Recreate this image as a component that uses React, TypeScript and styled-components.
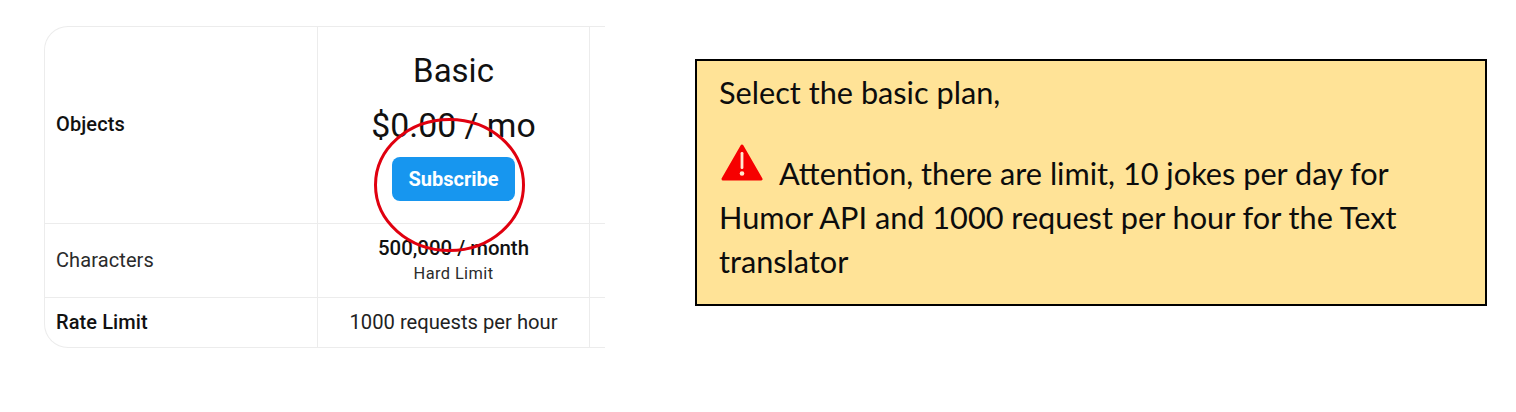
import React from "react";
import styled, { createGlobalStyle } from "styled-components";

const Global = createGlobalStyle`
  html, body { margin: 0; padding: 0; background: #fff; }
  body { font-family: "Inter", "Liberation Sans", sans-serif; }
`;

const Page = styled.div`
  width: 1516px;
  height: 412px;
  box-sizing: border-box;
  padding: 26px 0 0 44px;
  display: flex;
  align-items: flex-start;
  gap: 90px;
  overflow: hidden;
`;

const TableFrame = styled.div`
  position: relative;
  width: 561px;
  height: 322px;
`;

const Table = styled.div`
  width: 561px;
  height: 322px;
  box-sizing: border-box;
  border: 1px solid #ececec;
  border-right: 0;
  border-radius: 24px 0 0 24px;
  overflow: hidden;
  display: grid;
  grid-template-columns: 273px 272px 272px;
  grid-template-rows: 197px 74px 49px;
`;

const Cell = styled.div<{ $bottom?: boolean }>`
  box-sizing: border-box;
  border-right: 1px solid #ececec;
  border-bottom: ${(p) => (p.$bottom ? "0" : "1px solid #ececec")};
  display: flex;
  flex-direction: column;
  align-items: center;
  justify-content: center;
  color: #1b1b1b;
`;

const LabelCell = styled(Cell)`
  align-items: flex-start;
  padding-left: 11px;
`;

const Label = styled.span<{ $bold?: boolean }>`
  font-family: "Roboto", "Inter", sans-serif;
  font-size: 20px;
  letter-spacing: 0.1px;
  font-weight: ${(p) => (p.$bold ? 500 : 400)};
  color: ${(p) => (p.$bold ? "#111" : "#2b2b2b")};
  margin-top: -2px;
`;

const PlanName = styled.div`
  font-family: "Roboto", sans-serif;
  font-size: 33px;
  line-height: 38px;
  color: #111;
  margin-top: 3px;
`;

const Price = styled.div`
  font-family: "Roboto", sans-serif;
  font-size: 33.8px;
  line-height: 40px;
  margin-top: 16px;
  color: #111;
`;

const SubscribeButton = styled.button`
  width: 123px;
  height: 44px;
  margin-top: 11px;
  border: 0;
  border-radius: 8px;
  background: #1796ef;
  color: #fff;
  font-family: "Roboto", sans-serif;
  font-size: 20px;
  font-weight: 700;
  padding: 0;
`;

const Quota = styled.div`
  font-family: "Roboto", sans-serif;
  font-size: 20.4px;
  font-weight: 500;
  line-height: 24px;
  color: #111;
  margin-top: 2px;
`;

const QuotaNote = styled.div`
  font-family: "Roboto", sans-serif;
  font-size: 16.4px;
  letter-spacing: 0.4px;
  line-height: 26px;
  color: #2b2b2b;
  margin-top: 1px;
`;

const Rate = styled.span`
  font-family: "Roboto", sans-serif;
  font-size: 20.2px;
  color: #222;
  margin-top: -2px;
`;

const Circle = styled.svg`
  position: absolute;
  left: 329px;
  top: 90px;
  width: 154px;
  height: 138px;
  pointer-events: none;
`;

const Note = styled.div`
  width: 792px;
  height: 247px;
  margin-top: 33px;
  box-sizing: border-box;
  border: 2px solid #000;
  background: #ffe397;
  padding: 10px 20px 0 22px;
  font-family: "Lato", "Noto Sans", sans-serif;
  font-size: 30.7px;
  line-height: 44px;
  color: #0c0c0c;
`;

const NoteHead = styled.div`
  margin-bottom: 29px;
`;

const NoteBody = styled.div``;

const Warning = styled.svg`
  width: 42px;
  height: 38px;
  margin: 0 16px 0 2px;
  vertical-align: 3px;
`;

export default function App() {
  return (
    <Page>
      <Global />
      <TableFrame>
        <Table>
          <LabelCell><Label $bold>Objects</Label></LabelCell>
          <Cell>
            <PlanName>Basic</PlanName>
            <Price>$0.00 / mo</Price>
            <SubscribeButton>Subscribe</SubscribeButton>
          </Cell>
          <Cell />
          <LabelCell><Label>Characters</Label></LabelCell>
          <Cell>
            <Quota>500,000 / month</Quota>
            <QuotaNote>Hard Limit</QuotaNote>
          </Cell>
          <Cell />
          <LabelCell $bottom><Label $bold>Rate Limit</Label></LabelCell>
          <Cell $bottom><Rate>1000 requests per hour</Rate></Cell>
          <Cell $bottom />
        </Table>
        <Circle viewBox="0 0 154 138">
          <ellipse cx="76.5" cy="69" rx="74" ry="65.5" fill="none" stroke="#e0000f" strokeWidth="3" />
        </Circle>
      </TableFrame>
      <Note>
        <NoteHead>Select the basic plan,</NoteHead>
        <NoteBody>
          <Warning viewBox="0 0 42 38">
            <path d="M21 2 L40 35 H2 Z" fill="#f60000" stroke="#f60000" strokeWidth="3" strokeLinejoin="round" />
            <rect x="19.6" y="8" width="2.8" height="17" rx="1.2" fill="#ffe9d0" />
            <circle cx="21" cy="29.5" r="2.3" fill="#ffe9d0" />
          </Warning>
          Attention, there are limit, 10 jokes per day for Humor API and 1000 request per hour for the Text translator
        </NoteBody>
      </Note>
    </Page>
  );
}
